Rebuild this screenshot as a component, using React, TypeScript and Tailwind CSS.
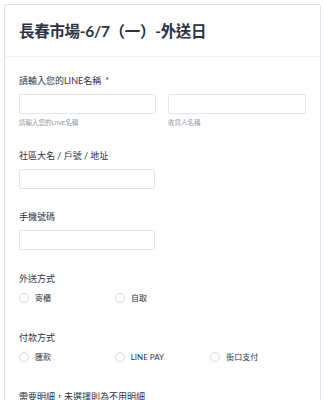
const font = { fontFamily: '"Lato", "Noto Sans CJK TC", sans-serif' };

function Label({ text, required }: { text: string; required?: boolean }) {
  return (
    <div className="text-[9px] leading-[12px] text-[#2c3345]">
      {text}
      {required && <span className="ml-[4px]">*</span>}
    </div>
  );
}

function Input({ w }: { w: string }) {
  return <div className={`${w} h-[20px] rounded-[2px] border border-[#e1e6ee] bg-white`} />;
}

function Radio({ label }: { label: string }) {
  return (
    <div className="flex w-[96px] items-center gap-[6px]">
      <span className="h-[10px] w-[10px] rounded-full border border-[#d6dbe3] bg-white" />
      <span className="text-[8px] leading-[12px] text-[#2c3345]">{label}</span>
    </div>
  );
}

export default function App() {
  return (
    <div className="h-[400px] overflow-hidden bg-white p-[4px]" style={font}>
      <div className="h-[420px] rounded-t-[2px] border border-[#d9e2ee] bg-white">
        <div className="flex h-[52px] items-center border-b border-[#f0f2f7] px-[14px]">
          <h1 className="text-[15.5px] font-bold leading-[20px] tracking-[-0.3px] text-[#2c3345]">
            長春市場-6/7（一）-外送日
          </h1>
        </div>

        <div className="px-[14px] pt-[18px]">
          <Label text="請輸入您的LINE名稱" required />
          <div className="mt-[7px] flex gap-[12px]">
            <div>
              <Input w="w-[137px]" />
              <div className="mt-[4px] text-[6.5px] leading-[10px] text-[#8f96a3]">請輸入您的LINE名稱</div>
            </div>
            <div>
              <Input w="w-[138px]" />
              <div className="mt-[4px] text-[6.5px] leading-[10px] text-[#8f96a3]">收貨人名稱</div>
            </div>
          </div>

          <div className="mt-[22px]">
            <Label text="社區大名 / 戶號 / 地址" />
            <div className="mt-[7px]">
              <Input w="w-[136px]" />
            </div>
          </div>

          <div className="mt-[22px]">
            <Label text="手機號碼" />
            <div className="mt-[7px]">
              <Input w="w-[136px]" />
            </div>
          </div>

          <div className="mt-[23px]">
            <Label text="外送方式" />
            <div className="mt-[7px] flex">
              <Radio label="寄櫃" />
              <Radio label="自取" />
            </div>
          </div>

          <div className="mt-[28px]">
            <Label text="付款方式" />
            <div className="mt-[7px] flex">
              <Radio label="匯款" />
              <Radio label="LINE PAY" />
              <Radio label="街口支付" />
            </div>
          </div>

          <div className="mt-[28px]">
            <Label text="需要明細，未選擇則為不用明細" />
          </div>
        </div>
      </div>
    </div>
  );
}
